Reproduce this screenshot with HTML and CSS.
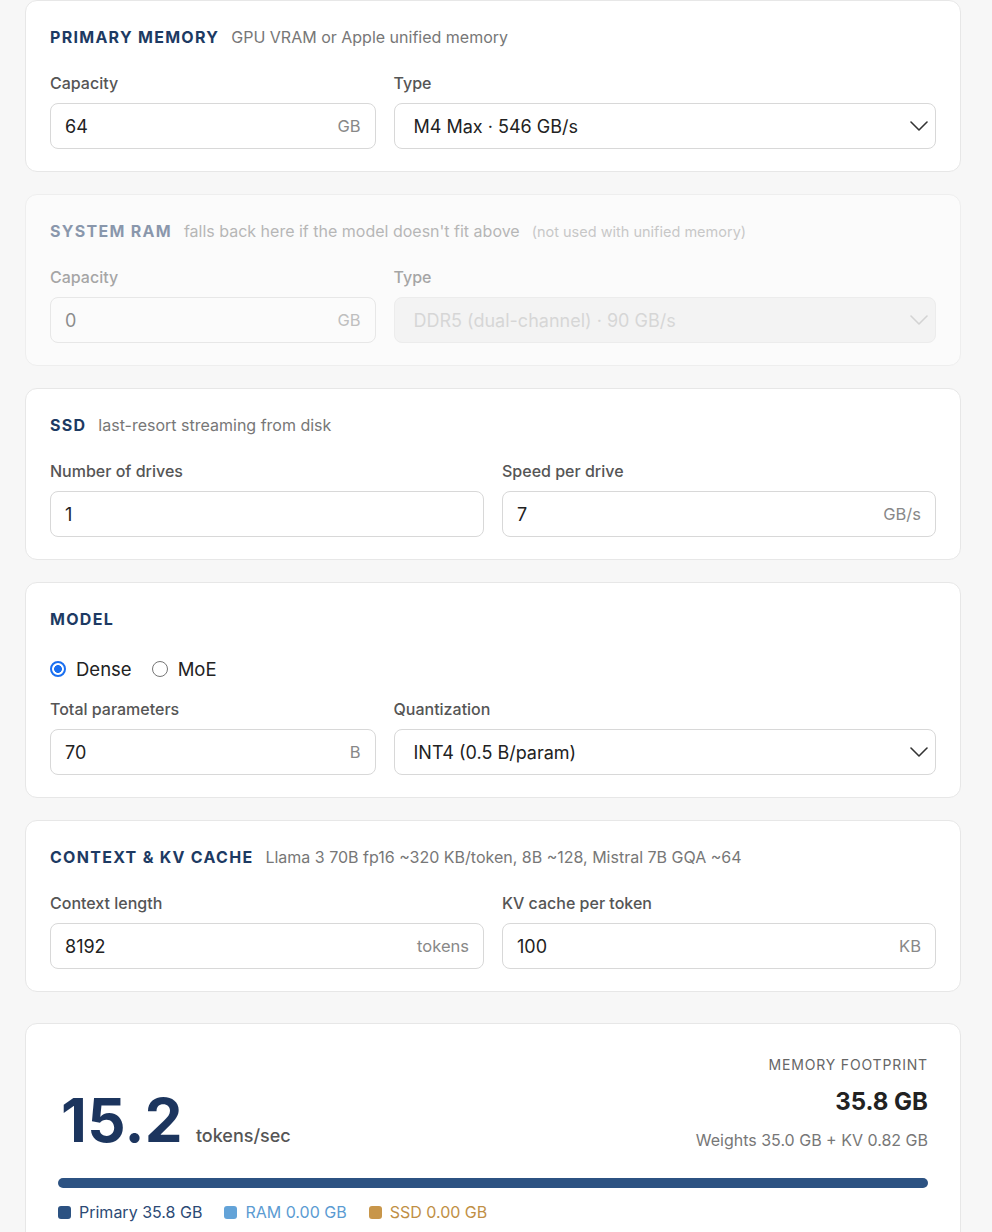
FILE: index.html
```html
<!DOCTYPE html>
<html lang="en">
<head>
  <meta charset="UTF-8">
  <title>LLM Inference Speed Estimator</title>
  <meta name="viewport" content="width=device-width, initial-scale=1.0">
  <link rel="stylesheet" href="styles.css">
</head>
<body>
  <div class="page">

    <section class="card">
      <div class="card-head">
        <h2>Primary memory</h2>
        <span class="hint">GPU VRAM or Apple unified memory</span>
      </div>
      <div class="grid">
        <div class="field">
          <label for="vram">Capacity</label>
          <div class="box"><input type="text" id="vram" value="64"><span class="unit">GB</span></div>
        </div>
        <div class="field">
          <label for="vramType">Type</label>
          <div class="box select">
            <select id="vramType">
              <option>M4 Max · 546 GB/s</option>
            </select>
            <svg class="chev" width="18" height="10" viewBox="0 0 18 10"><path d="M1 1l8 8 8-8" fill="none" stroke="currentColor" stroke-width="1.6" stroke-linecap="round" stroke-linejoin="round"/></svg>
          </div>
        </div>
      </div>
    </section>

    <section class="card off">
      <div class="card-head">
        <h2>System RAM</h2>
        <span class="hint">falls back here if the model doesn't fit above</span>
        <span class="note">(not used with unified memory)</span>
      </div>
      <div class="grid">
        <div class="field">
          <label for="ram">Capacity</label>
          <div class="box"><input type="text" id="ram" value="0" disabled><span class="unit">GB</span></div>
        </div>
        <div class="field">
          <label for="ramType">Type</label>
          <div class="box select disabled">
            <select id="ramType" disabled>
              <option>DDR5 (dual-channel) · 90 GB/s</option>
            </select>
            <svg class="chev" width="18" height="10" viewBox="0 0 18 10"><path d="M1 1l8 8 8-8" fill="none" stroke="currentColor" stroke-width="1.6" stroke-linecap="round" stroke-linejoin="round"/></svg>
          </div>
        </div>
      </div>
    </section>

    <section class="card">
      <div class="card-head">
        <h2>SSD</h2>
        <span class="hint">last-resort streaming from disk</span>
      </div>
      <div class="grid even">
        <div class="field">
          <label for="drives">Number of drives</label>
          <div class="box"><input type="text" id="drives" value="1"></div>
        </div>
        <div class="field">
          <label for="driveSpeed">Speed per drive</label>
          <div class="box"><input type="text" id="driveSpeed" value="7"><span class="unit">GB/s</span></div>
        </div>
      </div>
    </section>

    <section class="card">
      <div class="card-head">
        <h2>Model</h2>
      </div>
      <div class="radios">
        <label class="radio"><input type="radio" name="arch" checked> Dense</label>
        <label class="radio"><input type="radio" name="arch"> MoE</label>
      </div>
      <div class="grid">
        <div class="field">
          <label for="params">Total parameters</label>
          <div class="box"><input type="text" id="params" value="70"><span class="unit">B</span></div>
        </div>
        <div class="field">
          <label for="quant">Quantization</label>
          <div class="box select">
            <select id="quant">
              <option>INT4 (0.5 B/param)</option>
            </select>
            <svg class="chev" width="18" height="10" viewBox="0 0 18 10"><path d="M1 1l8 8 8-8" fill="none" stroke="currentColor" stroke-width="1.6" stroke-linecap="round" stroke-linejoin="round"/></svg>
          </div>
        </div>
      </div>
    </section>

    <section class="card">
      <div class="card-head">
        <h2>Context &amp; KV cache</h2>
        <span class="hint">Llama 3 70B fp16 ~320 KB/token, 8B ~128, Mistral 7B GQA ~64</span>
      </div>
      <div class="grid even">
        <div class="field">
          <label for="ctx">Context length</label>
          <div class="box"><input type="text" id="ctx" value="8192"><span class="unit">tokens</span></div>
        </div>
        <div class="field">
          <label for="kv">KV cache per token</label>
          <div class="box"><input type="text" id="kv" value="100"><span class="unit">KB</span></div>
        </div>
      </div>
    </section>

    <section class="card result">
      <div class="result-top">
        <div class="speed">
          <span class="speed-num">15.2</span>
          <span class="speed-unit">tokens/sec</span>
        </div>
        <div class="footprint">
          <div class="fp-label">Memory footprint</div>
          <div class="fp-value">35.8 GB</div>
          <div class="fp-detail">Weights 35.0 GB + KV 0.82 GB</div>
        </div>
      </div>
      <div class="bar">
        <div class="seg seg-primary" style="width: 100%"></div>
        <div class="seg seg-ram" style="width: 0%"></div>
        <div class="seg seg-ssd" style="width: 0%"></div>
      </div>
      <div class="legend">
        <span class="key key-primary"><i></i>Primary 35.8 GB</span>
        <span class="key key-ram"><i></i>RAM 0.00 GB</span>
        <span class="key key-ssd"><i></i>SSD 0.00 GB</span>
      </div>
    </section>

  </div>
</body>
</html>
```

FILE: styles.css
```css
body {
  margin: 0;
  background: #f7f7f7;
  font-family: Inter, "Noto Sans", "Liberation Sans", sans-serif;
  color: #222;
}
.page {
  width: 936px;
  margin-left: 25px;
  padding-bottom: 40px;
}
.card {
  background: #fff;
  border: 1px solid #e7e7e7;
  border-radius: 12px;
  padding: 22px 24px;
  margin-bottom: 22px;
}
.card.off {
  opacity: 0.5;
}
.card-head {
  display: flex;
  align-items: baseline;
  height: 28px;
  line-height: 28px;
  margin-bottom: 22px;
}
.card-head h2 {
  margin: 0 12px 0 0;
  font-size: 16px;
  font-weight: 700;
  letter-spacing: 0.08em;
  text-transform: uppercase;
  color: #1d3a63;
}
.hint {
  font-size: 16px;
  color: #777;
}
.note {
  font-size: 14.5px;
  color: #999;
  margin-left: 12px;
}
.grid {
  display: grid;
  grid-template-columns: minmax(0, 3fr) minmax(0, 5fr);
  gap: 18px;
}
.grid.even {
  grid-template-columns: minmax(0, 1fr) minmax(0, 1fr);
}
.field label {
  display: block;
  font-size: 16px;
  font-weight: 500;
  line-height: 20px;
  color: #555;
  margin-bottom: 10px;
}
.box {
  display: flex;
  align-items: center;
  height: 46px;
  box-sizing: border-box;
  border: 1px solid #d8d8d8;
  border-radius: 8px;
  padding: 0 14px;
  background: #fff;
}
.box input {
  flex: 1;
  min-width: 0;
  border: none;
  outline: none;
  padding: 0;
  background: transparent;
  font-family: inherit;
  font-size: 18px;
  color: #222;
}
.box input:disabled {
  color: #222;
}
.unit {
  font-size: 16.5px;
  color: #888;
}
.box.select {
  padding: 0 7px 0 0;
}
.box.select select {
  appearance: none;
  -webkit-appearance: none;
  flex: 1;
  min-width: 0;
  height: 100%;
  border: none;
  outline: none;
  background: transparent;
  padding: 0 19px;
  font-family: inherit;
  font-size: 18px;
  color: #222;
}
.chev {
  flex: none;
  color: #333;
}
.box.select.disabled {
  background: #f0f0f0;
  border-color: #e2e2e2;
}
.box.select.disabled select {
  color: #a0a0a0;
}
.box.select.disabled .chev {
  color: #b0b0b0;
}
.radios {
  display: flex;
  align-items: center;
  gap: 20px;
  height: 28px;
  margin-bottom: 16px;
}
.radio {
  display: flex;
  align-items: center;
  gap: 10px;
  font-size: 18.5px;
  color: #222;
}
.radio input {
  appearance: none;
  -webkit-appearance: none;
  width: 16px;
  height: 16px;
  margin: 0;
  box-sizing: border-box;
  border: 1px solid #767676;
  border-radius: 50%;
  background: #fff;
}
.radio input:checked {
  border: 2px solid #1a6ff0;
  background: radial-gradient(circle, #1a6ff0 0 3.6px, #fff 4.2px);
}

.result {
  padding: 32px;
  margin-top: 31px;
}
.result-top {
  display: flex;
  justify-content: space-between;
  align-items: flex-end;
}
.speed {
  display: flex;
  align-items: baseline;
  gap: 13px;
  padding-left: 3px;
}
.speed-num {
  font-size: 60px;
  font-weight: 700;
  line-height: 1;
  letter-spacing: 0.005em;
  color: #1c355e;
}
.speed-unit {
  font-size: 18px;
  font-weight: 500;
  color: #555;
}
.footprint {
  text-align: right;
}
.fp-label {
  font-size: 14px;
  line-height: 18px;
  letter-spacing: 0.06em;
  text-transform: uppercase;
  color: #666;
}
.fp-value {
  font-size: 24px;
  font-weight: 700;
  line-height: 30px;
  margin-top: 13px;
  color: #222;
}
.fp-detail {
  font-size: 16px;
  line-height: 20px;
  margin-top: 13px;
  color: #777;
}
.bar {
  display: flex;
  height: 10px;
  border-radius: 5px;
  overflow: hidden;
  background: #e9edf2;
  margin-top: 28px;
}
.seg-primary { background: #2c5282; }
.seg-ram { background: #63a3d8; }
.seg-ssd { background: #c8964a; }
.legend {
  display: flex;
  gap: 22px;
  margin-top: 14px;
  font-size: 16px;
  line-height: 20px;
}
.key {
  display: flex;
  align-items: center;
  gap: 8px;
}
.key i {
  width: 13px;
  height: 13px;
  border-radius: 3px;
}
.key-primary { color: #2c4a75; }
.key-primary i { background: #2c5282; }
.key-ram { color: #5b9bd2; }
.key-ram i { background: #63a3d8; }
.key-ssd { color: #c08f45; }
.key-ssd i { background: #c8964a; }
```
